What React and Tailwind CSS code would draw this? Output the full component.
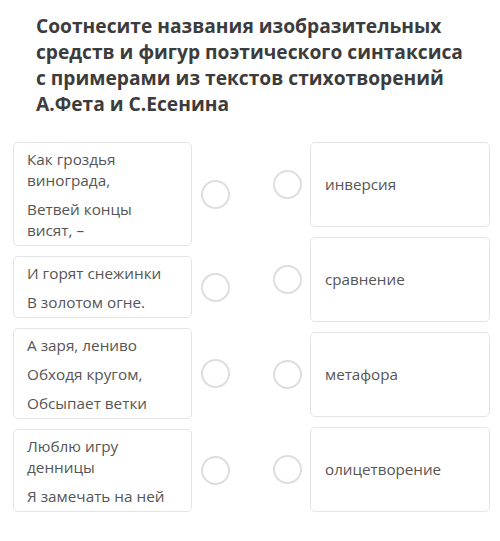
import React from 'react';

const leftItems = [
  ['Как гроздья винограда,', 'Ветвей концы висят, –'],
  ['И горят снежинки', 'В золотом огне.'],
  ['А заря, лениво', 'Обходя кругом,', 'Обсыпает ветки'],
  ['Люблю игру денницы', 'Я замечать на ней'],
];

const rightItems = ['инверсия', 'сравнение', 'метафора', 'олицетворение'];

const Circle = () => (
  <div className="w-[29px] h-[29px] rounded-full border-[2.5px] border-[#dedede] shrink-0" />
);

export default function App() {
  return (
    <div className="w-[500px] h-[541px] bg-white font-['Open_Sans',sans-serif] overflow-hidden">
      <h1 className="pl-[36px] pt-[13px] text-[19.2px] leading-[26px] font-bold text-[#3c3c3c] whitespace-nowrap">
        Соотнесите названия изобразительных
        <br />
        средств и фигур поэтического синтаксиса
        <br />
        с примерами из текстов стихотворений
        <br />
        А.Фета и С.Есенина
      </h1>
      <div className="flex mt-[25px]">
        <div className="flex flex-col gap-[10px] pl-[13px] w-[245px]">
          {leftItems.map((lines, i) => (
            <div key={i} className="flex items-center">
              <div className="w-[179px] rounded-[5px] border border-[#e4e4e4] px-[13px] pt-[6px] pb-[4px] flex flex-col gap-[8px] text-[15.3px] leading-[21px] text-[#555]">
                {lines.map((l, j) => (
                  <div key={j}>{l}</div>
                ))}
              </div>
              <div className="ml-[9px]">
                <Circle />
              </div>
            </div>
          ))}
        </div>
        <div className="flex flex-col gap-[10px] pl-[28px]">
          {rightItems.map((t, i) => (
            <div key={i} className="flex items-center">
              <Circle />
              <div className="ml-[8px] w-[180px] h-[85px] rounded-[5px] border border-[#e4e4e4] px-[14px] flex items-center text-[15.2px] text-[#555]">
                {t}
              </div>
            </div>
          ))}
        </div>
      </div>
    </div>
  );
}
